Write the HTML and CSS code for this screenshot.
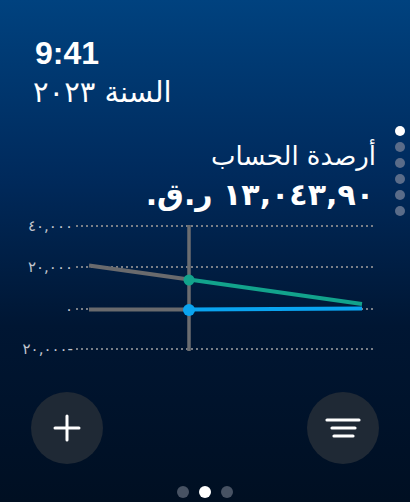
FILE: index.html
```html
<!DOCTYPE html>
<html lang="ar">
<head>
<meta charset="utf-8">
<link rel="stylesheet" href="styles.css">
</head>
<body>
<div class="screen">
  <div class="header">
    <div class="time">9:41</div>
    <div class="year" dir="rtl">السنة ٢٠٢٣</div>
  </div>
  <div class="balance" dir="rtl">
    <div class="label">أرصدة الحساب</div>
    <div class="amount">١٣,٠٤٣,٩٠ ر.ق.</div>
  </div>
  <svg class="chart" width="410" height="145" viewBox="0 215 410 145">
    <g class="grid">
      <line x1="76" y1="226" x2="375" y2="226"/>
      <line x1="76" y1="267" x2="375" y2="267"/>
      <line x1="76" y1="309" x2="375" y2="309"/>
      <line x1="76" y1="349" x2="375" y2="349"/>
    </g>
    <g class="ylabels">
      <text x="73" y="231">٤٠,٠٠٠</text>
      <text x="73" y="272">٢٠,٠٠٠</text>
      <text x="73" y="314">٠</text>
      <text x="73" y="354">٢٠,٠٠٠-</text>
    </g>
    <line class="cursor" x1="189" y1="225" x2="189" y2="351"/>
    <line class="past" x1="89" y1="265.5" x2="189" y2="279.5"/>
    <line class="past" x1="89" y1="309.5" x2="189" y2="309.5"/>
    <line class="teal" x1="189" y1="279.5" x2="362" y2="304"/>
    <line class="blue" x1="189" y1="309.5" x2="362" y2="308.5"/>
    <circle class="dot-teal" cx="189" cy="280" r="5.5"/>
    <circle class="dot-blue" cx="189" cy="310" r="6"/>
  </svg>
  <div class="actions">
    <button class="round-btn" aria-label="add">
      <svg width="28" height="28" viewBox="0 0 28 28"><path d="M14 2v24M2 14h24" stroke="#fff" stroke-width="3" stroke-linecap="round"/></svg>
    </button>
    <button class="round-btn" aria-label="filter">
      <svg width="36" height="24" viewBox="0 0 36 24"><path d="M2 4h32M7 12h23M9 20h19" stroke="#fff" stroke-width="3.2" stroke-linecap="round"/></svg>
    </button>
  </div>
  <div class="pager">
    <span class="pdot"></span><span class="pdot on"></span><span class="pdot"></span>
  </div>
  <div class="side-dots">
    <span class="sdot on"></span><span class="sdot"></span><span class="sdot"></span><span class="sdot"></span><span class="sdot"></span><span class="sdot"></span>
  </div>
</div>
</body>
</html>
```
FILE: styles.css
```css
html, body { margin: 0; padding: 0; }
body { background: #000f22; }
.screen {
  position: relative;
  width: 410px;
  height: 502px;
  overflow: hidden;
  background: linear-gradient(180deg, #00427f 0%, #002a5c 35%, #001633 65%, #000f22 100%);
  color: #fff;
  font-family: "DejaVu Sans", "Liberation Sans", sans-serif;
  display: flex;
  flex-direction: column;
}
.header {
  padding: 36px 0 0 33px;
  display: flex;
  flex-direction: column;
  align-items: flex-start;
}
.time {
  font-family: "Liberation Sans", Arial, sans-serif;
  font-weight: bold;
  font-size: 32px;
  line-height: 34px;
  margin-left: 2px;
}
.year {
  font-size: 29px;
  line-height: 40px;
  margin-top: 2px;
}
.balance {
  padding: 28px 36px 0 0;
  text-align: right;
}
.label {
  font-size: 26px;
  line-height: 32px;
  margin-right: -2px;
}
.amount {
  font-weight: bold;
  font-size: 30px;
  line-height: 46px;
}
.chart { display: block; margin-top: -3px; }
.grid line { stroke: #7a7f87; stroke-width: 2; stroke-dasharray: 2 3; }
.ylabels text { fill: #c3c7cf; font-size: 15px; text-anchor: end; font-family: "DejaVu Sans", sans-serif; }
.cursor { stroke: #6b6d70; stroke-width: 3.5; }
.past { stroke: #696a6d; stroke-width: 4; }
.teal { stroke: #12a38c; stroke-width: 4; }
.blue { stroke: #0aa4f0; stroke-width: 4; }
.dot-teal { fill: #12a38c; }
.dot-blue { fill: #0aa4f0; }
.actions {
  display: flex;
  justify-content: space-between;
  padding: 32px 31px 0 31px;
}
.round-btn {
  width: 72px;
  height: 72px;
  border-radius: 50%;
  border: none;
  background: #1f2935;
  display: flex;
  align-items: center;
  justify-content: center;
  padding: 0;
}
.pager {
  display: flex;
  justify-content: center;
  gap: 10px;
  margin-top: 22px;
}
.pdot { width: 12px; height: 12px; border-radius: 50%; background: #475263; }
.pdot.on { background: #fff; }
.side-dots {
  position: absolute;
  top: 126px;
  right: 5px;
  display: flex;
  flex-direction: column;
  gap: 6px;
}
.sdot { width: 10px; height: 10px; border-radius: 50%; background: #5a6c89; }
.sdot.on { background: #fff; }
```
